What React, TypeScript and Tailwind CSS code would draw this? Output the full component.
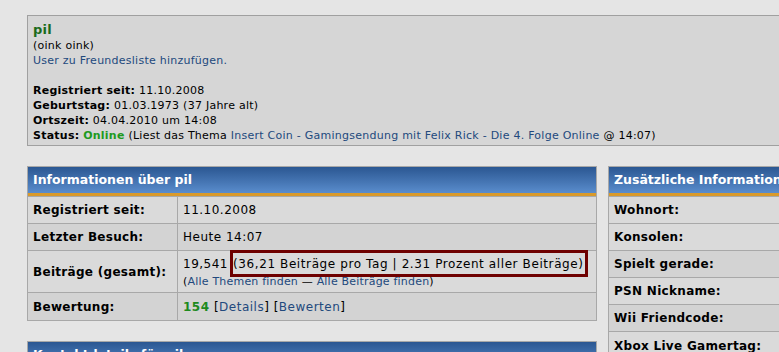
import React from "react";

const link = "text-[#22497d]";

function Header({ title }: { title: string }) {
  return (
    <div className="border-b border-[#a8a8a8]">
      <div className="h-[26px] bg-gradient-to-b from-[#2b5792] to-[#5a8dcd] px-[5px] flex items-center text-[12.5px] font-bold text-white whitespace-nowrap">
        {title}
      </div>
      <div className="h-[3px] bg-[#d99a2b]" />
    </div>
  );
}

function Row({
  label,
  children,
  dark,
  tall,
  labelW = "w-[150px]",
}: {
  label: string;
  children?: React.ReactNode;
  dark?: boolean;
  tall?: boolean;
  labelW?: string;
}) {
  return (
    <div className={`flex border-b border-[#a8a8a8] last:border-b-0 ${dark ? "bg-[#d3d3d3]" : "bg-[#dadada]"} ${tall ? "h-[42px]" : "h-[27px]"}`}>
      <div className={`${labelW} shrink-0 px-[5px] flex items-center border-r border-[#a8a8a8] text-[12px] font-bold tracking-[0.3px] whitespace-nowrap`}>
        {label}
      </div>
      <div className={`flex-1 px-[5px] flex flex-col ${tall ? "justify-start" : "justify-center"} text-[12px] tracking-[0.5px] whitespace-nowrap`}>
        {children}
      </div>
    </div>
  );
}

export default function App() {
  return (
    <div
      className="w-[779px] h-[352px] overflow-hidden bg-[#e5e5e5] text-black"
      style={{ fontFamily: '"DejaVu Sans", Verdana, sans-serif' }}
    >
      <div className="w-[900px] pl-[27px] pt-[15px]">
        {/* Profile summary */}
        <div className="border border-[#a0a0a0] bg-[#d6d6d6] px-[5px] pt-[6px] h-[131px] text-[11px] leading-[15px] tracking-[0.25px]">
          <div className="text-[13px] font-bold text-[#1b6b1b] leading-[16px]">pil</div>
          <div>(oink oink)</div>
          <div className={link}>User zu Freundesliste hinzufügen.</div>
          <div className="h-[15px]" />
          <div><b>Registriert seit:</b> 11.10.2008</div>
          <div><b>Geburtstag:</b> 01.03.1973 (37 Jahre alt)</div>
          <div><b>Ortszeit:</b> 04.04.2010 um 14:08</div>
          <div className="whitespace-nowrap">
            <b>Status:</b> <b className="text-[#1e9a1e]">Online</b> (Liest das Thema{" "}
            <span className={link}>Insert Coin - Gamingsendung mit Felix Rick - Die 4. Folge Online</span> @ 14:07)
          </div>
        </div>

        <div className="flex gap-[11px] mt-[20px] items-start">
          <div className="w-[570px] shrink-0">
            <div className="border border-[#a8a8a8]">
              <Header title="Informationen über pil" />
              <Row label="Registriert seit:">11.10.2008</Row>
              <Row label="Letzter Besuch:" dark>Heute 14:07</Row>
              <Row label="Beiträge (gesamt):" tall>
                <div className="flex items-center h-[27px] -mt-px">
                  <span>19,541</span>
                  <span className="ml-[2px] h-[27px] flex items-center border-[3px] border-[#6e0000] pr-px tracking-[0.6px]">
                    (36,21 Beiträge pro Tag | 2.31 Prozent aller Beiträge)
                  </span>
                </div>
                <div className="-mt-[2px] text-[11px] leading-[14px] tracking-[0.2px]">
                  (<span className={link}>Alle Themen finden</span> — <span className={link}>Alle Beiträge finden</span>)
                </div>
              </Row>
              <Row label="Bewertung:" dark>
                <div>
                  <b className="text-[#1e8a1e]">154</b> [<span className={link}>Details</span>] [<span className={link}>Bewerten</span>]
                </div>
              </Row>
            </div>
            <div className="mt-[20px] border border-[#a8a8a8]">
              <Header title="Kontaktdetails für pil" />
            </div>
          </div>

          <div className="w-[280px] shrink-0 border border-[#a8a8a8]">
            <Header title="Zusätzliche Informationen" />
            <Row label="Wohnort:" labelW="w-[200px]" />
            <Row label="Konsolen:" labelW="w-[200px]" />
            <Row label="Spielt gerade:" labelW="w-[200px]" dark />
            <Row label="PSN Nickname:" labelW="w-[200px]" />
            <Row label="Wii Friendcode:" labelW="w-[200px]" dark />
            <Row label="Xbox Live Gamertag:" labelW="w-[200px]" />
          </div>
        </div>
      </div>
    </div>
  );
}
